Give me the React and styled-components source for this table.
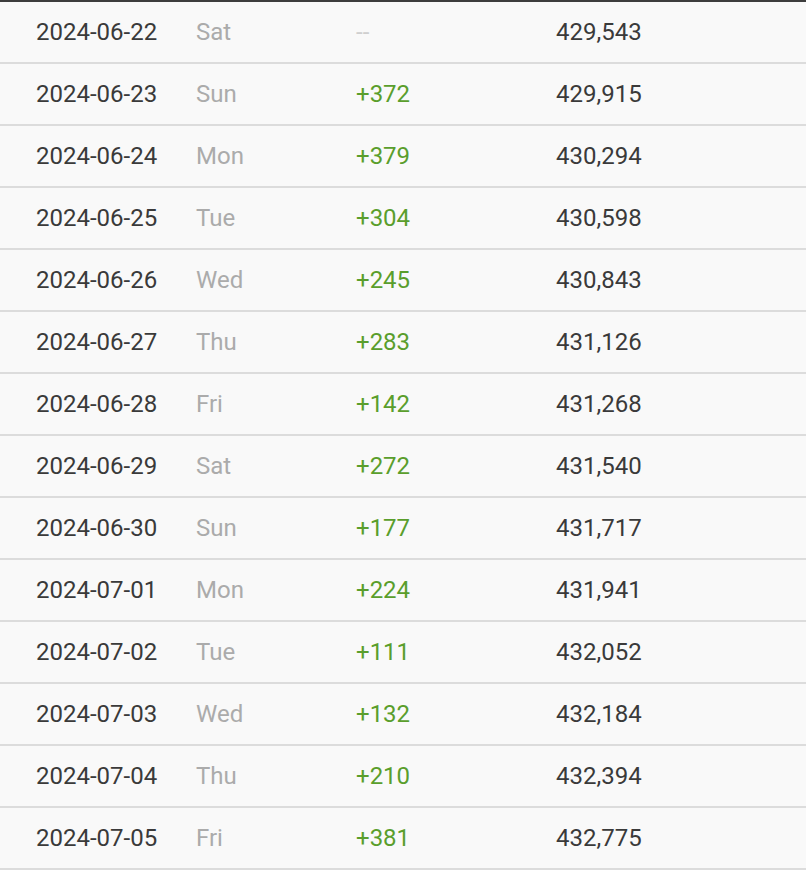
import React from 'react';
import styled, { createGlobalStyle } from 'styled-components';

const GlobalStyle = createGlobalStyle`
  html, body {
    margin: 0;
    padding: 0;
    background: #ffffff;
  }
`;

const Table = styled.div`
  width: 806px;
  border-top: 2px solid #3d3d3d;
  font-family: Roboto, "Liberation Sans", sans-serif;
  font-size: 24px;
`;

const Row = styled.div`
  display: grid;
  grid-template-columns: 160px 160px 200px 1fr;
  align-items: center;
  height: 60px;
  padding-left: 36px;
  background: #f9f9f9;
  border-bottom: 2px solid #dcdcdc;
`;

const Date = styled.span`
  color: #3a3a3a;
`;

const Day = styled.span`
  color: #ababab;
`;

const Change = styled.span`
  color: ${p => (p.$empty ? '#cfcfcf' : '#5a9e2c')};
`;

const Total = styled.span`
  color: #3a3a3a;
`;

const rows = [
  ['2024-06-22', 'Sat', null, '429,543'],
  ['2024-06-23', 'Sun', 372, '429,915'],
  ['2024-06-24', 'Mon', 379, '430,294'],
  ['2024-06-25', 'Tue', 304, '430,598'],
  ['2024-06-26', 'Wed', 245, '430,843'],
  ['2024-06-27', 'Thu', 283, '431,126'],
  ['2024-06-28', 'Fri', 142, '431,268'],
  ['2024-06-29', 'Sat', 272, '431,540'],
  ['2024-06-30', 'Sun', 177, '431,717'],
  ['2024-07-01', 'Mon', 224, '431,941'],
  ['2024-07-02', 'Tue', 111, '432,052'],
  ['2024-07-03', 'Wed', 132, '432,184'],
  ['2024-07-04', 'Thu', 210, '432,394'],
  ['2024-07-05', 'Fri', 381, '432,775'],
];

export default function App() {
  return (
    <>
      <GlobalStyle />
      <Table>
        {rows.map(([date, day, change, total]) => (
          <Row key={date}>
            <Date>{date}</Date>
            <Day>{day}</Day>
            {change === null
              ? <Change $empty>--</Change>
              : <Change>+{change}</Change>}
            <Total>{total}</Total>
          </Row>
        ))}
      </Table>
    </>
  );
}
